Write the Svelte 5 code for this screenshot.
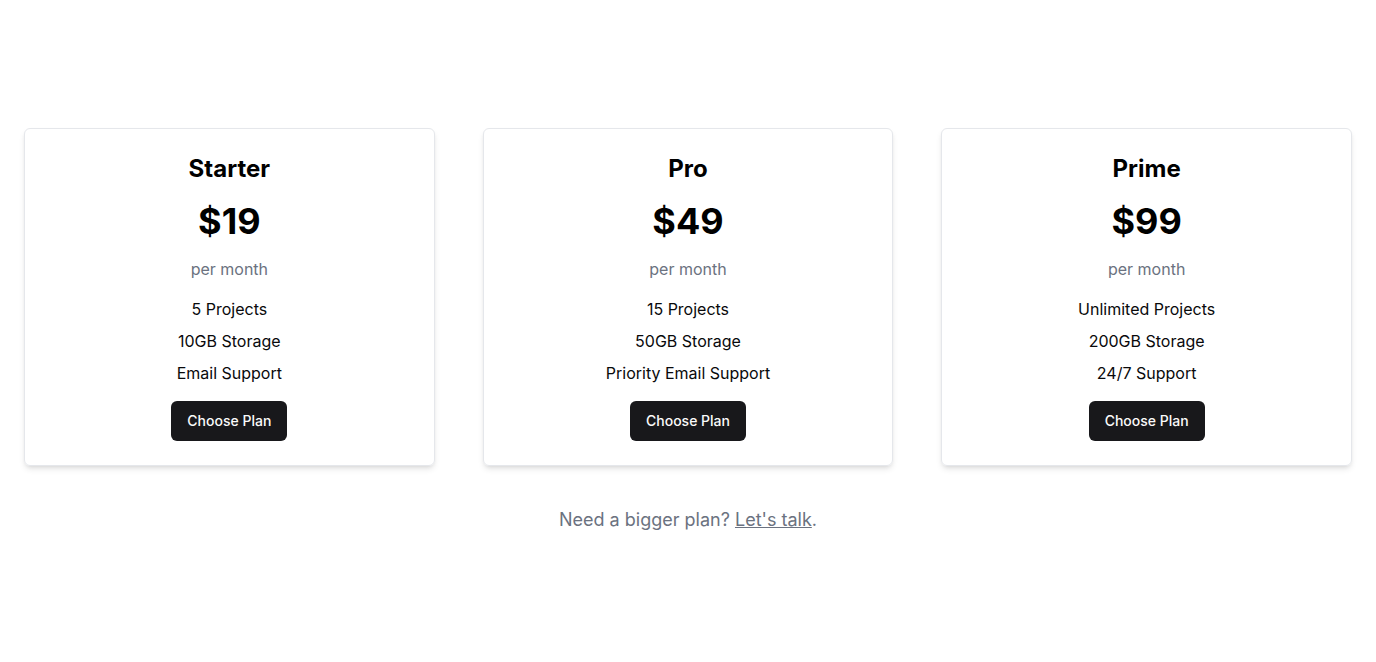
<script>
  const plans = [
    { name: 'Starter', price: '$19', features: ['5 Projects', '10GB Storage', 'Email Support'] },
    { name: 'Pro', price: '$49', features: ['15 Projects', '50GB Storage', 'Priority Email Support'] },
    { name: 'Prime', price: '$99', features: ['Unlimited Projects', '200GB Storage', '24/7 Support'] }
  ];
</script>

<main>
  <div class="plans">
    {#each plans as plan}
      <section class="card">
        <h2>{plan.name}</h2>
        <p class="price">{plan.price}</p>
        <p class="period">per month</p>
        <ul>
          {#each plan.features as feature}
            <li>{feature}</li>
          {/each}
        </ul>
        <button type="button">Choose Plan</button>
      </section>
    {/each}
  </div>
  <p class="contact">Need a bigger plan? <a href="#contact">Let's talk</a>.</p>
</main>

<style>
  :global(body) {
    background: #fff;
    color: #09090b;
    font-family: Inter, sans-serif;
    font-size: 16px;
    line-height: 24px;
  }

  main {
    padding: 128px 24px;
  }

  .plans {
    display: grid;
    grid-template-columns: repeat(3, minmax(0, 1fr));
    gap: 48px;
  }

  .card {
    display: flex;
    flex-direction: column;
    align-items: center;
    padding: 24px;
    border: 1px solid #e5e7eb;
    border-radius: 6px;
    box-shadow: 0 4px 6px -1px rgb(0 0 0 / 0.1), 0 2px 4px -2px rgb(0 0 0 / 0.1);
    text-align: center;
  }

  h2,
  p,
  ul {
    margin: 0;
    padding: 0;
  }

  h2 {
    font-size: 24px;
    line-height: 32px;
    font-weight: 700;
    color: #000;
  }

  .price {
    margin-top: 16px;
    font-size: 36px;
    line-height: 40px;
    font-weight: 700;
    color: #000;
  }

  .period {
    margin-top: 16px;
    color: #6b7280;
  }

  ul {
    display: flex;
    flex-direction: column;
    gap: 8px;
    margin-top: 16px;
    list-style: none;
  }

  button {
    height: 40px;
    margin-top: 16px;
    padding: 8px 16px;
    border: 0;
    border-radius: 6px;
    background: #18181b;
    color: #fafafa;
    font: 500 14px/20px Inter, sans-serif;
    cursor: pointer;
  }

  .contact {
    margin-top: 40px;
    font-size: 18px;
    line-height: 28px;
    color: #6b7280;
    text-align: center;
  }

  a {
    color: inherit;
    text-decoration: underline;
  }
</style>
